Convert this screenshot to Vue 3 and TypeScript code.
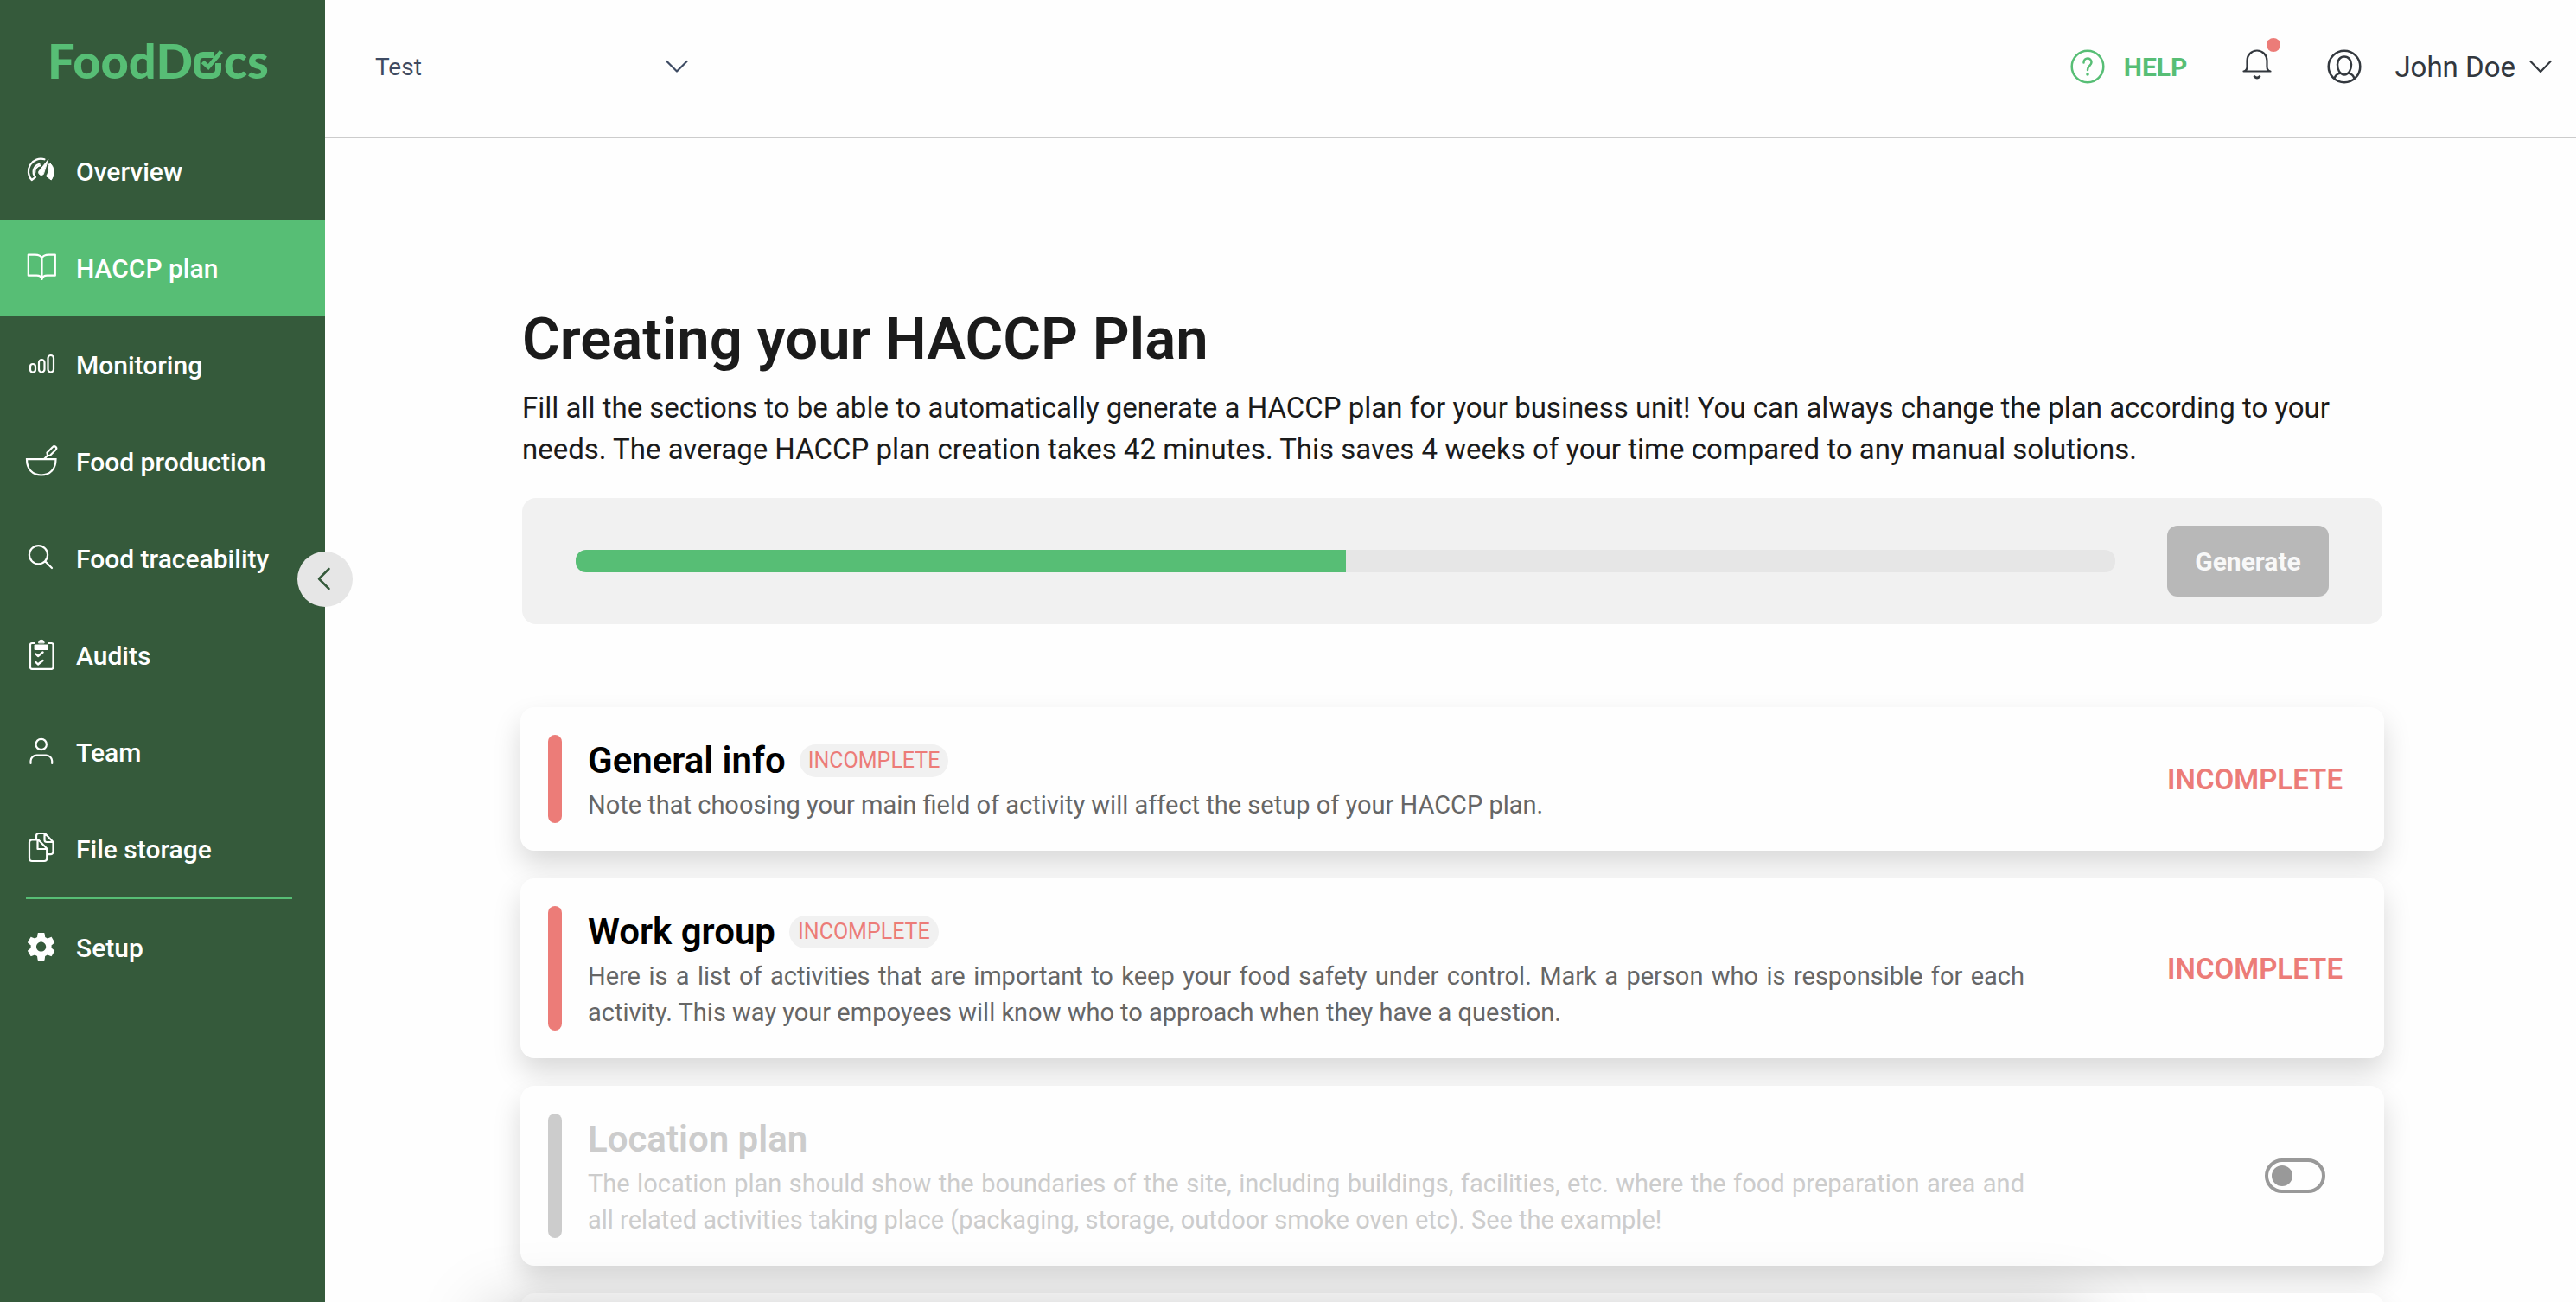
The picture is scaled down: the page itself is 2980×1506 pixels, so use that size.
<script setup lang="ts">
import { ref } from 'vue'

interface NavItem {
  id: string
  label: string
}

interface Section {
  title: string
  text: string
  required: boolean
}

const navItems: NavItem[] = [
  { id: 'overview', label: 'Overview' },
  { id: 'plan', label: 'HACCP plan' },
  { id: 'monitoring', label: 'Monitoring' },
  { id: 'production', label: 'Food production' },
  { id: 'traceability', label: 'Food traceability' },
  { id: 'audits', label: 'Audits' },
  { id: 'team', label: 'Team' },
  { id: 'files', label: 'File storage' },
  { id: 'setup', label: 'Setup' },
]

const sections: Section[] = [
  {
    title: 'General info',
    text: 'Note that choosing your main field of activity will affect the setup of your HACCP plan.',
    required: true,
  },
  {
    title: 'Work group',
    text: 'Here is a list of activities that are important to keep your food safety under control. Mark a person who is responsible for each activity. This way your empoyees will know who to approach when they have a question.',
    required: true,
  },
  {
    title: 'Location plan',
    text: 'The location plan should show the boundaries of the site, including buildings, facilities, etc. where the food preparation area and all related activities taking place (packaging, storage, outdoor smoke oven etc). See the example!',
    required: false,
  },
]

const active = ref('plan')
const unit = ref('Test')
const progress = ref(50)
const locationEnabled = ref(false)
</script>

<template>
  <div class="shell">
    <aside class="sidebar">
      <a class="logo" href="#" aria-label="FoodDocs">
        <span>FoodD</span>
        <svg class="logo-check" viewBox="0 0 36 34" fill="none" stroke="currentColor">
          <path d="M24 6.500H12A7 7 0 0 0 5 13.500V23.500A7 7 0 0 0 12 30.500H22.500A7 7 0 0 0 29.500 23.500V16" stroke-width="7" />
          <path d="M11.500 14.500L18 20.500L33 2.500" stroke-width="5" />
        </svg>
        <span>cs</span>
      </a>

      <nav class="nav">
        <a
          v-for="item in navItems"
          :key="item.id"
          href="#"
          class="nav-item"
          :class="{ active: item.id === active, divided: item.id === 'setup' }"
          @click.prevent="active = item.id"
        >
          <svg class="nav-icon" viewBox="0 0 40 40" fill="none" stroke="currentColor" stroke-width="2.2" stroke-linecap="round" stroke-linejoin="round" aria-hidden="true">
            <template v-if="item.id === 'overview'">
              <path d="M23.500 6.300A14.500 14.500 0 0 0 8.700 30L13 26.800A9.200 9.200 0 0 1 17.500 11.700" />
              <path d="M12.300 21.500A7.500 7.500 0 0 1 19 13.300" stroke-width="2" />
              <path d="M27.500 7L16.800 20.200A3.300 3.300 0 0 0 22 23.800Z" fill="currentColor" stroke-width="1" />
              <path d="M29.800 10.500A14.500 14.500 0 0 1 31.300 30L25.500 25.800C28 22.500 28.800 18 27.800 15Z" fill="currentColor" stroke-width="1" />
            </template>
            <path v-else-if="item.id === 'plan'" d="M20.500 8.500C19 5 16 4.600 12.500 4.600H4.800V28.700H14.500C18 28.700 19.800 30 20.500 33C21.200 30 23 28.700 26.500 28.700H35.800V4.600H28.500C25 4.600 22 5 20.500 8.500ZV32" />
            <template v-else-if="item.id === 'monitoring'">
              <rect x="7" y="19" width="6" height="9.500" rx="3" />
              <rect x="17" y="14" width="6.500" height="14.500" rx="3.200" />
              <rect x="27.500" y="9" width="6.500" height="19.500" rx="3.200" />
            </template>
            <template v-else-if="item.id === 'production'">
              <path d="M3 17.200H36.500C36.500 29 29.500 35.500 19.700 35.500S3 29 3 17.200Z" stroke-linejoin="miter" />
              <path d="M23.500 16.500L27.500 12.500M26.500 9.500L33 3A2.300 2.300 0 0 1 36.500 6.300L30 12.800L27 13Z" />
            </template>
            <template v-else-if="item.id === 'traceability'">
              <circle cx="16.500" cy="15.800" r="10.600" />
              <path d="M24.500 23.500L32 31" />
            </template>
            <template v-else-if="item.id === 'audits'">
              <path d="M12 6H9A2 2 0 0 0 7 8V33.800A2 2 0 0 0 9 35.800H31.500A2 2 0 0 0 33.500 33.800V8A2 2 0 0 0 31.500 6H28" />
              <path d="M16.600 5.500A3.200 3.200 0 0 1 23.200 5.500ZM12.500 8H27.500V13.500H12.500Z" fill="currentColor" stroke-width="1" />
              <path d="M13.500 18.500L16 21L21.500 16.500M13.500 28L16 30.500L21.500 26" stroke-width="2.400" />
            </template>
            <template v-else-if="item.id === 'team'">
              <circle cx="19.700" cy="11" r="6.200" />
              <path d="M7.500 33V30A7 7 0 0 1 14.500 23.500H25.500A7 7 0 0 1 32.200 30V33" />
            </template>
            <template v-else-if="item.id === 'files'">
              <path d="M14 8.500V5A3 3 0 0 1 17 2H24L33.500 12V23A3 3 0 0 1 30.500 26.200H27M23.500 2V9.500A2.500 2.500 0 0 0 26 12H33" />
              <path d="M9 9.500H16.500L26.200 19.500V31A3 3 0 0 1 23.200 34H9A3 3 0 0 1 6 31V12.500A3 3 0 0 1 9 9.500ZM15.500 10V20H26" />
            </template>
            <path
              v-else
              transform="translate(.4 -.2) scale(1.6)"
              fill="currentColor"
              stroke="none"
              d="M19.430 12.980c.04-.32.07-.64.07-.98s-.03-.66-.07-.98l2.110-1.650c.19-.15.24-.42.12-.64l-2-3.460c-.12-.22-.39-.3-.61-.22l-2.490 1c-.52-.4-1.080-.73-1.690-.98l-.38-2.650C14.460 2.180 14.250 2 14 2h-4c-.25 0-.46.18-.49.42l-.38 2.650c-.61.25-1.170.59-1.690.98l-2.490-1c-.23-.09-.49 0-.61.22l-2 3.460c-.13.22-.07.49.12.64l2.110 1.650c-.04.32-.07.65-.07.98s.03.66.07.98l-2.110 1.650c-.19.15-.24.42-.12.64l2 3.460c.12.22.39.3.61.22l2.490-1c.52.4 1.080.73 1.690.98l.38 2.650c.03.24.24.42.49.42h4c.25 0 .46-.18.49-.42l.38-2.650c.61-.25 1.170-.59 1.690-.98l2.490 1c.23.09.49 0 .61-.22l2-3.460c.12-.22.07-.49-.12-.64l-2.110-1.650zM12 15.500c-1.930 0-3.500-1.570-3.500-3.500s1.570-3.500 3.500-3.500 3.500 1.570 3.500 3.500-1.570 3.500-3.500 3.500z"
            />
          </svg>
          <span>{{ item.label }}</span>
        </a>
      </nav>

      <button class="collapse" type="button" aria-label="Collapse menu">
        <svg viewBox="0 0 64 64" fill="none" stroke="#355a3b" stroke-width="2.500" stroke-linecap="round" stroke-linejoin="round">
          <path d="M36.500 20L25 31.500L36.500 43" />
        </svg>
      </button>
    </aside>

    <div class="page">
      <header class="topbar">
        <div class="unit">
          <select v-model="unit" aria-label="Business unit">
            <option value="Test">Test</option>
          </select>
          <svg class="chevron" viewBox="0 0 26 16" fill="none" stroke="currentColor" stroke-width="2.200" stroke-linecap="round" stroke-linejoin="round">
            <path d="M1.500 2L13 13.500L24.500 2" />
          </svg>
        </div>

        <div class="tools">
          <a class="help" href="#">
            <svg class="round-icon" viewBox="0 0 40 40" fill="none" stroke="currentColor" stroke-width="2.500" stroke-linecap="round">
              <circle cx="20" cy="20" r="18.300" />
              <path d="M15.500 15.500C15.500 8.600 24.500 9 24.500 15C24.500 19 20 19 20 24" />
              <circle cx="20" cy="29" r="1.800" fill="currentColor" stroke="none" />
            </svg>
            <span>HELP</span>
          </a>

          <button class="bell" type="button" aria-label="Notifications">
            <svg viewBox="0 0 34 40" fill="none" stroke="currentColor" stroke-width="2.200" stroke-linecap="round" stroke-linejoin="round">
              <path d="M1.500 25.500C4.500 25 5.500 23 5.500 20V13A11.500 11.500 0 0 1 28.500 13V20C28.500 23 29.500 25 32.500 25.500Z" />
              <path d="M14 31.500Q17 34.500 20 31.500" stroke-width="2.600" />
            </svg>
            <span class="dot"></span>
          </button>

          <button class="user" type="button">
            <svg class="round-icon" viewBox="0 0 40 40" fill="none" stroke="currentColor" stroke-width="2.500">
              <circle cx="20" cy="20" r="18.300" />
              <path d="M20 8.500C15 8.500 12 12.500 12 17.500C12 24 15 29.500 20 29.500S28 24 28 17.500C28 12.500 25 8.500 20 8.500Z" />
              <path d="M8.500 34C9.500 29.500 12 28.500 15.500 27.500M31.500 34C30.500 29.500 28 28.500 24.500 27.500" />
            </svg>
            <span class="user-name">John Doe</span>
            <svg class="chevron" viewBox="0 0 26 16" fill="none" stroke="currentColor" stroke-width="2.200" stroke-linecap="round" stroke-linejoin="round">
              <path d="M1.500 2L13 14L24.500 2" />
            </svg>
          </button>
        </div>
      </header>

      <main class="content">
        <section class="intro">
          <h1>Creating your HACCP Plan</h1>
          <p>
            Fill all the sections to be able to automatically generate a HACCP plan for your business unit! You can always change the plan according to your needs. The average HACCP plan creation takes 42 minutes. This saves 4 weeks of your time compared to any manual solutions.
          </p>
          <div class="panel">
            <div class="track" role="progressbar" aria-label="Plan progress" :aria-valuenow="progress">
              <div class="fill" :style="{ width: progress + '%' }"></div>
            </div>
            <button class="generate" type="button" disabled>Generate</button>
          </div>
        </section>

        <section class="cards">
          <article v-for="section in sections" :key="section.title" class="card" :class="{ optional: !section.required }">
            <span class="bar"></span>
            <div class="body">
              <div class="heading">
                <h2>{{ section.title }}</h2>
                <span v-if="section.required" class="badge">INCOMPLETE</span>
              </div>
              <p>{{ section.text }}</p>
            </div>
            <span v-if="section.required" class="status">INCOMPLETE</span>
            <input v-else v-model="locationEnabled" class="toggle" type="checkbox" role="switch" :aria-label="section.title" />
          </article>
          <article class="card upcoming"></article>
        </section>
      </main>
    </div>

    <div class="dock"></div>
  </div>
</template>

<style>
body {
  margin: 0;
  overflow: hidden;
}
</style>

<style scoped>
* {
  box-sizing: border-box;
}

.shell {
  display: flex;
  height: 100vh;
  overflow: hidden;
  background: #fefefe;
  color: #1b1b1b;
  font-family: Roboto, 'Noto Sans', sans-serif;
}

h1,
h2,
p {
  margin: 0;
}

a {
  color: inherit;
  text-decoration: none;
}

button,
select {
  padding: 0;
  border: 0;
  background: none;
  color: inherit;
  font: inherit;
  cursor: pointer;
}

svg {
  display: block;
  flex: none;
}

.sidebar {
  position: relative;
  z-index: 2;
  flex: 0 0 376px;
  background: #355a3b;
  color: #fff;
}

.logo {
  display: flex;
  align-items: baseline;
  height: 142px;
  padding: 38px 0 0 55px;
  color: #57be75;
  font-family: Lato, sans-serif;
  font-size: 56px;
  font-weight: 900;
  line-height: 64px;
}

.logo-check {
  width: 36px;
  height: 34px;
}

.nav-item {
  display: flex;
  align-items: center;
  gap: 20px;
  height: 112px;
  padding-left: 28px;
  font-size: 30px;
  font-weight: 500;
}

.nav-item.active {
  background: #57be75;
}

.nav-item.divided {
  height: 114px;
  margin: 0 38px 0 30px;
  padding-left: 0;
  border-top: 2px solid #57be75;
}

.nav-icon {
  width: 40px;
  height: 40px;
}

.divided .nav-icon {
  margin-left: -2px;
}

.collapse {
  position: absolute;
  top: 638px;
  right: -32px;
  width: 64px;
  height: 64px;
  border-radius: 50%;
  background: #e6e6e6;
}

.page {
  flex: 1;
  min-width: 0;
}

.topbar {
  display: flex;
  align-items: center;
  justify-content: space-between;
  height: 160px;
  padding: 0 28px 4px 58px;
  border-bottom: 2px solid #ccc;
}

.unit {
  display: flex;
  align-items: center;
  width: 362px;
  color: #3e4b63;
}

.unit select {
  flex: 1;
  appearance: none;
  margin-right: -26px;
  outline: 0;
  font-size: 28px;
}

.unit .chevron {
  pointer-events: none;
}

.chevron {
  width: 26px;
  height: 16px;
}

.tools {
  display: flex;
  align-items: center;
  gap: 64px;
  color: #33383e;
}

.help {
  display: flex;
  align-items: center;
  gap: 22px;
  color: #57be75;
  font-size: 30px;
  font-weight: 700;
}

.round-icon {
  width: 40px;
  height: 40px;
}

.bell {
  position: relative;
}

.bell svg {
  width: 34px;
  height: 40px;
}

.dot {
  position: absolute;
  top: -13px;
  right: -10px;
  width: 16px;
  height: 16px;
  border-radius: 50%;
  background: #ec7c78;
}

.user {
  display: flex;
  align-items: center;
  font-size: 33px;
}

.user-name {
  margin: 0 16px 0 38px;
}

.content {
  padding: 194px 222px 0 226px;
}

.intro {
  padding: 0 2px;
}

h1 {
  font-size: 67px;
  font-weight: 600;
  line-height: 76px;
}

.intro p {
  margin-top: 18px;
  font-size: 33px;
  line-height: 48px;
}

.panel {
  display: flex;
  align-items: center;
  gap: 60px;
  height: 146px;
  margin-top: 32px;
  padding: 0 62px;
  border-radius: 16px;
  background: #f1f1f1;
}

.track {
  flex: 1;
  height: 26px;
  border-radius: 12px;
  background: #e6e6e6;
  overflow: hidden;
}

.fill {
  height: 100%;
  background: #57be75;
}

.generate {
  width: 187px;
  height: 82px;
  border-radius: 12px;
  background: #b8b8b8;
  color: #f8f8f8;
  font-size: 30px;
  font-weight: 700;
}

.cards {
  display: grid;
  gap: 32px;
  margin-top: 96px;
}

.card {
  display: grid;
  grid-template-columns: 16px 1fr 338px;
  column-gap: 30px;
  align-items: center;
  padding: 32px 48px 32px 32px;
  border-radius: 16px;
  background: #fefefe;
  box-shadow: 0 16px 32px rgba(0, 0, 0, 0.15);
}

.upcoming {
  height: 208px;
}

.bar {
  align-self: stretch;
  border-radius: 8px;
  background: #ec7c78;
}

.heading {
  display: flex;
  align-items: center;
  gap: 16px;
  height: 60px;
}

h2 {
  color: #000;
  font-size: 42px;
  font-weight: 600;
  line-height: 60px;
}

.badge {
  padding: 0 10px;
  border-radius: 20px;
  background: #f1f1f1;
  color: #ec7c78;
  font-size: 25px;
  line-height: 38px;
}

.body p {
  color: #666;
  font-size: 29px;
  line-height: 42px;
  text-align: justify;
}

.status {
  justify-self: end;
  color: #ec7c78;
  font-size: 33px;
  font-weight: 600;
}

.optional .bar {
  background: #ccc;
}

.optional h2,
.optional p {
  color: #ccc;
}

.toggle {
  display: flex;
  align-items: center;
  justify-self: end;
  appearance: none;
  width: 70px;
  height: 40px;
  margin: 0 20px 0 0;
  padding: 0 4px;
  border: 4px solid #999;
  border-radius: 20px;
  cursor: pointer;
}

.toggle::before {
  content: '';
  width: 24px;
  height: 24px;
  border-radius: 50%;
  background: #999;
}

.toggle:checked {
  justify-content: flex-end;
}

/* Bar docked just under the window edge; only its shadow reaches the page. */
.dock {
  position: fixed;
  top: calc(100% + 14px);
  right: 19%;
  left: 19%;
  z-index: 3;
  height: 120px;
  box-shadow: 0 0 80px rgba(0, 0, 0, 0.25);
}
</style>
